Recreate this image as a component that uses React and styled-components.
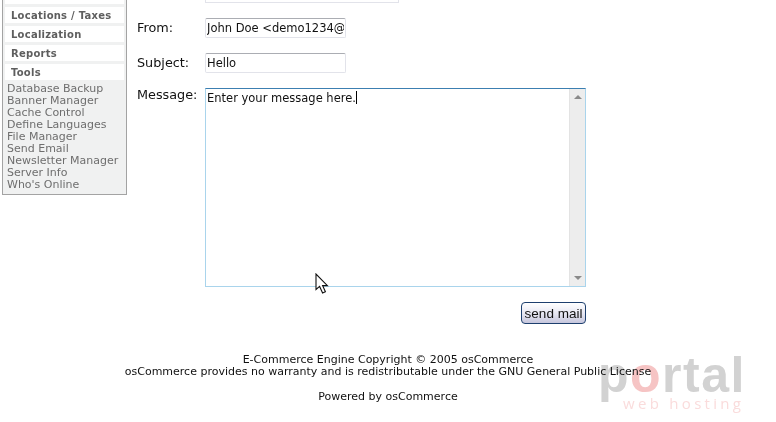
import React from "react";
import styled, { createGlobalStyle } from "styled-components";

const GlobalStyle = createGlobalStyle`
	html, body {
		margin: 0;
		padding: 0;
		background: #ffffff;
	}
	body {
		font-family: "DejaVu Sans", Verdana, sans-serif;
	}
`;

const headings = ["Locations / Taxes", "Localization", "Reports", "Tools"];
const tools = [
	"Database Backup",
	"Banner Manager",
	"Cache Control",
	"Define Languages",
	"File Manager",
	"Send Email",
	"Newsletter Manager",
	"Server Info",
	"Who's Online",
];

function Pointer() {
	return (
		<CursorIcon width="14" height="22" viewBox="0 0 14 22">
			<path
				d="M1 1 V16.5 L4.6 13.4 L7.6 20 L10.4 18.8 L7.6 12.6 H12.4 Z"
				fill="#ffffff"
				stroke="#111111"
				strokeWidth="1.1"
			/>
		</CursorIcon>
	);
}

function Watermark() {
	return (
		<WatermarkBox>
			<WatermarkTitle>
				p<WatermarkO>o</WatermarkO>rtal
			</WatermarkTitle>
			<WatermarkSub>web hosting</WatermarkSub>
		</WatermarkBox>
	);
}

export default function App() {
	return (
		<Page>
			<GlobalStyle />
			<Columns>
				<Sidebar>
					<SidebarTop />
					{headings.map((h) => (
						<Heading key={h}>{h}</Heading>
					))}
					<ToolList>
						{tools.map((t) => (
							<ToolLink key={t}>{t}</ToolLink>
						))}
					</ToolList>
				</Sidebar>
				<Main>
					<ClippedInput />
					<FormGrid>
						<Label>From:</Label>
						<Field readOnly value="John Doe <demo1234@example.com>" />
						<Label>Subject:</Label>
						<Field readOnly value="Hello" />
						<Label $raised>Message:</Label>
						<MessageBox>
							<MessageText>
								Enter your message here.<Caret />
							</MessageText>
							<ScrollTrack>
								<ArrowUp />
								<ArrowDown />
							</ScrollTrack>
						</MessageBox>
					</FormGrid>
					<ButtonRow>
						<SendButton>send mail</SendButton>
					</ButtonRow>
				</Main>
			</Columns>
			<Footer>
				<div>E-Commerce Engine Copyright © 2005 osCommerce</div>
				<div>osCommerce provides no warranty and is redistributable under the GNU General Public License</div>
				<PoweredBy>Powered by osCommerce</PoweredBy>
			</Footer>
			<Pointer />
			<Watermark />
		</Page>
	);
}

const Page = styled.div`
	position: relative;
	width: 776px;
	height: 422px;
	overflow: hidden;
	background: #ffffff;
`;

const Columns = styled.div`
	display: flex;
	align-items: flex-start;
	padding-left: 2px;
`;

const Sidebar = styled.aside`
	width: 119px;
	padding: 0 2px 3px 2px;
	background: #f0f1f1;
	border: 1px solid #a3a3a3;
	border-top: 0;
	display: flex;
	flex-direction: column;
	gap: 3px;
`;

const SidebarTop = styled.div`
	height: 4px;
	background: #ffffff;
`;

const Heading = styled.div`
	height: 16px;
	line-height: 18px;
	padding-left: 6px;
	background: #ffffff;
	font-size: 10px;
	font-weight: bold;
	letter-spacing: 0.25px;
	color: #5e5e5e;
`;

const ToolList = styled.div`
	padding-left: 2px;
`;

const ToolLink = styled.div`
	height: 12px;
	line-height: 12px;
	font-size: 11px;
	color: #6e6e6e;
	white-space: nowrap;
`;

const Main = styled.main`
	width: 449px;
	margin-left: 10px;
`;

const ClippedInput = styled.div`
	width: 192px;
	height: 2px;
	margin-left: 68px;
	border: 1px solid #e2e3ea;
	border-top: 0;
`;

const FormGrid = styled.div`
	display: grid;
	grid-template-columns: 68px 381px;
	grid-auto-rows: min-content;
	row-gap: 15px;
	margin-top: 15px;
`;

const Label = styled.div`
	margin-top: ${(props) => (props.$raised ? "-3px" : "0")};
	font-size: 12.8px;
	line-height: 20px;
	color: #111111;
`;

const Field = styled.input`
	width: 141px;
	height: 20px;
	box-sizing: border-box;
	padding: 0 1px;
	margin: 0;
	border: 1px solid #e2e3ea;
	border-top-color: #abadb3;
	border-radius: 2px;
	outline: none;
	font-family: "DejaVu Sans", Verdana, sans-serif;
	font-size: 11.5px;
	color: #111111;
`;

const MessageBox = styled.div`
	display: flex;
	height: 199px;
	border: 1px solid #a9d4ec;
	border-top-color: #3c7fb1;
	box-sizing: border-box;
`;

const MessageText = styled.div`
	flex: 1;
	padding: 2px 1px;
	font-size: 11.5px;
	line-height: 14px;
	color: #111111;
`;

const Caret = styled.span`
	display: inline-block;
	width: 1px;
	height: 13px;
	background: #000000;
	vertical-align: -2px;
`;

const ScrollTrack = styled.div`
	width: 16px;
	background: #ededed;
	border-left: 1px solid #e3e3e3;
	box-sizing: border-box;
	display: flex;
	flex-direction: column;
	align-items: center;
	justify-content: space-between;
	padding: 6px 0;
`;

const ArrowUp = styled.div`
	width: 0;
	height: 0;
	border-left: 4px solid transparent;
	border-right: 4px solid transparent;
	border-bottom: 4px solid #8a8a8a;
`;

const ArrowDown = styled.div`
	width: 0;
	height: 0;
	border-left: 4px solid transparent;
	border-right: 4px solid transparent;
	border-top: 4px solid #8a8a8a;
`;

const ButtonRow = styled.div`
	display: flex;
	justify-content: flex-end;
	margin-top: 15px;
`;

const SendButton = styled.button`
	width: 65px;
	height: 22px;
	padding: 0;
	border: 1px solid #1d3f6e;
	border-radius: 4px;
	background: linear-gradient(#ffffff, #e6e6f2 55%, #c6c6dc);
	font-family: "Liberation Sans", Arial, sans-serif;
	font-size: 13.5px;
	color: #111111;
`;

const Footer = styled.footer`
	margin-top: 30px;
	text-align: center;
	font-size: 11px;
	line-height: 12px;
	color: #111111;
`;

const PoweredBy = styled.div`
	margin-top: 13px;
`;

const CursorIcon = styled.svg`
	position: absolute;
	left: 315px;
	top: 273px;
`;

const WatermarkBox = styled.div`
	position: absolute;
	left: 598px;
	top: 350px;
	width: 150px;
	mix-blend-mode: multiply;
	pointer-events: none;
`;

const WatermarkTitle = styled.div`
	font-family: "Liberation Sans", sans-serif;
	font-size: 50px;
	font-weight: 700;
	line-height: 50px;
	letter-spacing: 1.5px;
	color: #d2d2d2;
`;

const WatermarkO = styled.span`
	color: #f6c4c4;
`;

const WatermarkSub = styled.div`
	margin-top: -6px;
	padding-left: 25px;
	font-family: "Open Sans", sans-serif;
	font-size: 15px;
	letter-spacing: 3.3px;
	line-height: 18px;
	color: #fadcdc;
	white-space: nowrap;
`;
